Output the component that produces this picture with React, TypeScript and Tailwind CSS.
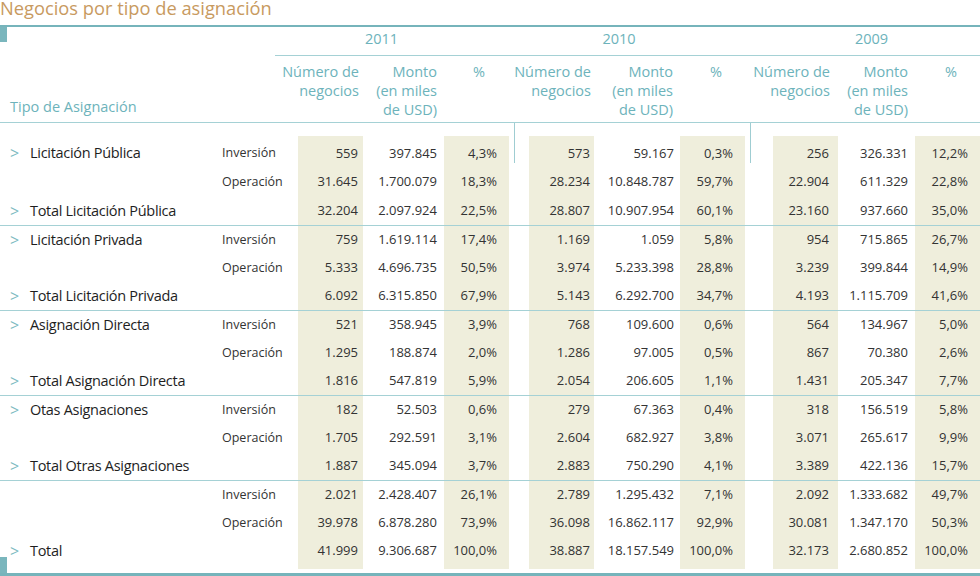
import React, { Fragment } from "react";

type Y = [string, string, string];
type Row = { label?: string; sub?: string; v: [Y, Y, Y] };

const COLS =
  "grid grid-cols-[222px_76px_65px_81px_65px_20px_65px_86px_65px_28px_65px_77px_65px]";
const SHADE = "bg-[#efeedc]";
const NUM_PAD = ["pr-[5px]", "pr-[4px]", "pr-[9px]"];
const MONTO_PAD = ["pr-[7px]", "pr-[6px]", "pr-[7px]"];

const groups: Row[][] = [
  [
    { label: "Licitación Pública", sub: "Inversión", v: [["559", "397.845", "4,3%"], ["573", "59.167", "0,3%"], ["256", "326.331", "12,2%"]] },
    { sub: "Operación", v: [["31.645", "1.700.079", "18,3%"], ["28.234", "10.848.787", "59,7%"], ["22.904", "611.329", "22,8%"]] },
    { label: "Total Licitación Pública", v: [["32.204", "2.097.924", "22,5%"], ["28.807", "10.907.954", "60,1%"], ["23.160", "937.660", "35,0%"]] },
  ],
  [
    { label: "Licitación Privada", sub: "Inversión", v: [["759", "1.619.114", "17,4%"], ["1.169", "1.059", "5,8%"], ["954", "715.865", "26,7%"]] },
    { sub: "Operación", v: [["5.333", "4.696.735", "50,5%"], ["3.974", "5.233.398", "28,8%"], ["3.239", "399.844", "14,9%"]] },
    { label: "Total Licitación Privada", v: [["6.092", "6.315.850", "67,9%"], ["5.143", "6.292.700", "34,7%"], ["4.193", "1.115.709", "41,6%"]] },
  ],
  [
    { label: "Asignación Directa", sub: "Inversión", v: [["521", "358.945", "3,9%"], ["768", "109.600", "0,6%"], ["564", "134.967", "5,0%"]] },
    { sub: "Operación", v: [["1.295", "188.874", "2,0%"], ["1.286", "97.005", "0,5%"], ["867", "70.380", "2,6%"]] },
    { label: "Total Asignación Directa", v: [["1.816", "547.819", "5,9%"], ["2.054", "206.605", "1,1%"], ["1.431", "205.347", "7,7%"]] },
  ],
  [
    { label: "Otas Asignaciones", sub: "Inversión", v: [["182", "52.503", "0,6%"], ["279", "67.363", "0,4%"], ["318", "156.519", "5,8%"]] },
    { sub: "Operación", v: [["1.705", "292.591", "3,1%"], ["2.604", "682.927", "3,8%"], ["3.071", "265.617", "9,9%"]] },
    { label: "Total Otras Asignaciones", v: [["1.887", "345.094", "3,7%"], ["2.883", "750.290", "4,1%"], ["3.389", "422.136", "15,7%"]] },
  ],
  [
    { sub: "Inversión", v: [["2.021", "2.428.407", "26,1%"], ["2.789", "1.295.432", "7,1%"], ["2.092", "1.333.682", "49,7%"]] },
    { sub: "Operación", v: [["39.978", "6.878.280", "73,9%"], ["36.098", "16.862.117", "92,9%"], ["30.081", "1.347.170", "50,3%"]] },
    { label: "Total", v: [["41.999", "9.306.687", "100,0%"], ["38.887", "18.157.549", "100,0%"], ["32.173", "2.680.852", "100,0%"]] },
  ],
];

function DataRow({ r }: { r: Row }) {
  return (
    <div className={`${COLS} text-[13px] text-[#333333]`}>
      <div className="flex items-center">
        {r.label && (
          <>
            <span className="w-[30px] pl-[10px] text-[16px] leading-none text-[#7dbbc2]">&gt;</span>
            <span className="text-[14.5px] tracking-[-0.3px] text-[#1e1e1e] whitespace-nowrap">{r.label}</span>
          </>
        )}
      </div>
      <div className="flex items-center text-[12.5px] text-[#333333]">{r.sub}</div>
      {r.v.map((y, i) => (
        <Fragment key={i}>
          <div className={`flex items-center justify-end ${SHADE} ${NUM_PAD[i]}`}>{y[0]}</div>
          <div className={`flex items-center justify-end whitespace-nowrap ${MONTO_PAD[i]}`}>{y[1]}</div>
          <div className={`flex items-center justify-end ${SHADE} pr-[12px]`}>{y[2]}</div>
          {i < 2 && <div />}
        </Fragment>
      ))}
    </div>
  );
}

function ShadeStrip({ cls }: { cls: string }) {
  return (
    <div className={`${COLS} ${cls}`}>
      <div />
      <div />
      <div className={SHADE} />
      <div />
      <div className={SHADE} />
      <div />
      <div className={SHADE} />
      <div />
      <div className={SHADE} />
      <div />
      <div className={SHADE} />
      <div />
      <div className={SHADE} />
    </div>
  );
}

function Head({ lines, pad }: { lines: string[]; pad: string }) {
  return (
    <div className={`flex flex-col items-end ${pad}`}>
      {lines.map((l, i) => (
        <div key={i} className="whitespace-nowrap">{l}</div>
      ))}
    </div>
  );
}

export default function App() {
  return (
    <div className="w-[980px] h-[576px] overflow-hidden bg-white font-['Open_Sans',sans-serif]">
      {/* Title */}
      <div className="h-[25px] text-[18.3px] leading-[16px] text-[#c89a5f] whitespace-nowrap">
        Negocios por tipo de asignación
      </div>
      <div className="h-[2px] bg-[#76b4bb]" />

      {/* Years */}
      <div className="flex h-[29px] text-[14.5px] leading-[18px] text-[#6db3bb]">
        <div className="w-[275px]">
          <div className="w-[7px] h-[15px] bg-[#7ab6bd]" />
        </div>
        <div className="flex flex-1 border-b border-[#a5d1d5] pt-[3px]">
          <div className="w-[213px] text-center">2011</div>
          <div className="w-[262px] text-center">2010</div>
          <div className="flex-1 pl-[13px] text-center">2009</div>
        </div>
      </div>

      {/* Column heads */}
      <div className={`${COLS} pt-[6px] pb-[3px] border-b border-[#a5d1d5] text-[14.5px] leading-[19px] text-[#6db3bb]`}>
        <div className="col-span-2 flex items-end pl-[10px] pb-[3px]">Tipo de Asignación</div>
        <Head lines={["Número de", "negocios"]} pad="pr-[4px]" />
        <Head lines={["Monto", "(en miles", "de USD)"]} pad="pr-[7px]" />
        <Head lines={["%"]} pad="pr-[24px]" />
        <div />
        <Head lines={["Número de", "negocios"]} pad="pr-[3px]" />
        <Head lines={["Monto", "(en miles", "de USD)"]} pad="pr-[7px]" />
        <Head lines={["%"]} pad="pr-[23px]" />
        <div />
        <Head lines={["Número de", "negocios"]} pad="pr-[8px]" />
        <Head lines={["Monto", "(en miles", "de USD)"]} pad="pr-[7px]" />
        <Head lines={["%"]} pad="pr-[23px]" />
      </div>

      {/* Spacer with short dividers */}
      <div className="relative">
        <ShadeStrip cls="h-[16px] pt-[13px]" />
        <div className="absolute left-[514px] top-0 w-px h-[40px] bg-[#9fcdd2]" />
        <div className="absolute left-[750px] top-0 w-px h-[40px] bg-[#9fcdd2]" />
      </div>

      {/* Groups */}
      {groups.map((g, gi) => (
        <div
          key={gi}
          className={
            gi === 0
              ? "grid grid-rows-3 h-[86px]"
              : "grid grid-rows-3 h-[85px] border-t border-[#a5d1d5]"
          }
        >
          {g.map((r, ri) => (
            <DataRow key={ri} r={r} />
          ))}
        </div>
      ))}

      {/* Bottom */}
      <div className="relative">
        <ShadeStrip cls="h-[4px]" />
        <div className="h-[4px]" />
        <div className="h-[3px] bg-[#76b4bb]" />
        <div className="absolute left-0 bottom-[3px] w-[7px] h-[16px] bg-[#7ab6bd]" />
      </div>
    </div>
  );
}
